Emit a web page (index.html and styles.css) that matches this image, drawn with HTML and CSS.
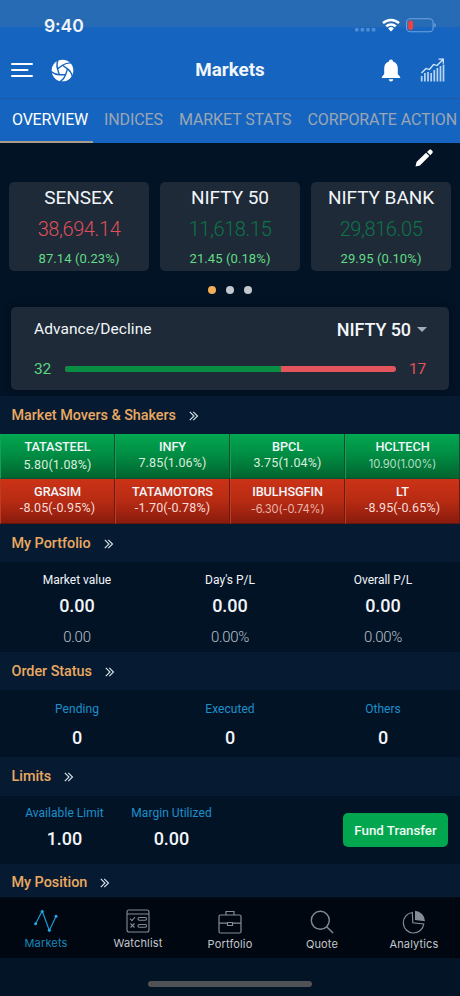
FILE: index.html
```html
<!DOCTYPE html>
<html lang="en">
<head>
<meta charset="utf-8">
<title>Markets</title>
<link rel="stylesheet" href="styles.css">
</head>
<body>
<svg class="defs" width="0" height="0"><defs>
  <symbol id="chev" viewBox="0 0 10 10"><path d="M.8.8 5 5 .8 9.2M4.3.8 8.5 5 4.3 9.2" fill="none" stroke="#dce6ef" stroke-width="1.1"/></symbol>
  <path id="blade" d="M12 6.500 17.230 10.300Q21 13 22.500 18.500"/>
</defs></svg>
<div class="app">
  <div class="status">
    <span class="time">9:40</span>
    <div class="status-icons">
      <svg width="22" height="5" viewBox="0 0 22 5" fill="#4f8cd3"><rect x="1" y="1" width="3.6" height="3.6" rx="1"/><rect x="6.6" y="1" width="3.6" height="3.6" rx="1"/><rect x="12.2" y="1" width="3.6" height="3.6" rx="1"/><rect x="17.8" y="1" width="3.6" height="3.6" rx="1"/></svg>
      <svg class="wifi" width="18" height="14" viewBox="0 0 18 14"><g fill="none" stroke="#fff" stroke-width="2.5"><path d="M1 5.1a11.6 11.6 0 0 1 16 0"/><path d="M4.2 8.4a7 7 0 0 1 9.6 0"/></g><path d="M6.1 10.4a4.3 4.3 0 0 1 5.800 0L9 13.400z" fill="#fff"/></svg>
      <svg class="battery" width="31" height="15" viewBox="0 0 31 15"><rect x=".6" y=".8" width="26.5" height="13" rx="3.8" fill="none" stroke="#6fa2df" stroke-width="1.1"/><path d="M28.400 5.200c2 .7 2 3.500 0 4.200z" fill="#6fa2df"/><rect x="2.200" y="2.600" width="4.800" height="9.500" rx="2" fill="#f0413f"/></svg>
    </div>
  </div>
  <header class="bar">
    <div class="bar-side">
      <svg width="22" height="16" viewBox="0 0 22 16" stroke="#fff" stroke-width="2" stroke-linecap="round"><path d="M1 2h20M1 8h15.500M1 14h20"/></svg>
      <svg class="logo" width="23" height="23" viewBox="0 0 24 24"><circle cx="12" cy="12" r="11.300" fill="#fff"/><g fill="none" stroke="#1565c0" stroke-width="1.400"><use href="#blade"/><use href="#blade" transform="rotate(72 12 12)"/><use href="#blade" transform="rotate(144 12 12)"/><use href="#blade" transform="rotate(216 12 12)"/><use href="#blade" transform="rotate(288 12 12)"/></g></svg>
    </div>
    <h1>Markets</h1>
    <div class="bar-side right">
      <svg width="20" height="23" viewBox="0 0 20 23" fill="#fff"><path d="M10 .5c1.200 0 2 .8 2 2 3.200 1 4.800 3.600 4.800 7v5.600l2.400 2.800v1.200H.8v-1.200l2.400-2.800V9.500c0-3.400 1.600-6 4.800-7 0-1.200.8-2 2-2zM7.800 20.300h4.400c0 1.300-1 2.200-2.200 2.200s-2.200-.9-2.200-2.200z"/></svg>
      <svg class="growth" width="25" height="24" viewBox="0 0 25 24" fill="none" stroke="#d5e8fb"><path d="M1.500 15 6 10.500 9.500 11.500 13.500 6.500 17 7.500 23 1.500M18.500 1.200h4.800v4.600" stroke-width="1.300"/><path d="M1.700 18v5.500M4.900 15v8.500M8 14v9.500M11.200 15v8.500M14.300 12v11.500M17.400 10v13.500M20.500 8v15.500M23.500 6.500v17" stroke-width="1.700" opacity=".85"/></svg>
    </div>
  </header>
  <nav class="tabs">
    <span class="tab on">OVERVIEW</span><span class="tab">INDICES</span><span class="tab">MARKET STATS</span><span class="tab">CORPORATE ACTION</span>
  </nav>
  <div class="edit"><svg width="20" height="20" viewBox="0 0 20 20" fill="#fff"><path d="M1.500 18.500 2.500 14 12 4.800 15.400 8.100 5.900 17.400ZM13 3.900 15.400 1.700Q16.300 1 17.200 1.800L18.400 3Q19.200 4 18.400 4.900L16.300 7.200Z"/></svg></div>
  <section class="indices">
    <article><h2>SENSEX</h2><p class="price down">38,694.14</p><p class="chg">87.14 (0.23%)</p></article>
    <article><h2>NIFTY 50</h2><p class="price">11,618.15</p><p class="chg">21.45 (0.18%)</p></article>
    <article><h2>NIFTY BANK</h2><p class="price">29,816.05</p><p class="chg">29.95 (0.10%)</p></article>
  </section>
  <div class="dots"><i class="on"></i><i></i><i></i></div>
  <section class="adv">
    <div class="adv-top"><span class="adv-label">Advance/Decline</span><span class="adv-index">NIFTY 50</span><i class="caret"></i></div>
    <div class="adv-row"><span class="up-n">32</span><div class="meter"><i></i></div><span class="down-n">17</span></div>
  </section>
  <h3 class="head movers-head"><span>Market Movers &amp; Shakers</span><svg><use href="#chev"/></svg></h3>
  <section class="tiles">
    <div class="low"><b>TATASTEEL</b><span>5.80(1.08%)</span></div>
    <div><b>INFY</b><span>7.85(1.06%)</span></div>
    <div><b>BPCL</b><span>3.75(1.04%)</span></div>
    <div class="plain"><b>HCLTECH</b><span>10.90(1.00%)</span></div>
    <div class="red"><b>GRASIM</b><span>-8.05(-0.95%)</span></div>
    <div class="red"><b>TATAMOTORS</b><span>-1.70(-0.78%)</span></div>
    <div class="red plain"><b>IBULHSGFIN</b><span>-6.30(-0.74%)</span></div>
    <div class="red"><b>LT</b><span>-8.95(-0.65%)</span></div>
  </section>
  <h3 class="head"><span>My Portfolio</span><svg><use href="#chev"/></svg></h3>
  <section class="stats portfolio">
    <div><span class="label">Market value</span><b>0.00</b><span class="sub">0.00</span></div>
    <div><span class="label">Day's P/L</span><b>0.00</b><span class="sub">0.00%</span></div>
    <div><span class="label">Overall P/L</span><b>0.00</b><span class="sub">0.00%</span></div>
  </section>
  <h3 class="head"><span>Order Status</span><svg><use href="#chev"/></svg></h3>
  <section class="stats orders">
    <div><span class="label">Pending</span><b>0</b></div>
    <div><span class="label">Executed</span><b>0</b></div>
    <div><span class="label">Others</span><b>0</b></div>
  </section>
  <h3 class="head limits-head"><span>Limits</span><svg><use href="#chev"/></svg></h3>
  <section class="stats limits">
    <div><span class="label">Available Limit</span><b>1.00</b></div>
    <div><span class="label">Margin Utilized</span><b>0.00</b></div>
    <button>Fund Transfer</button>
  </section>
  <h3 class="head last"><span>My Position</span><svg><use href="#chev"/></svg></h3>
  <nav class="bottom">
    <a class="on"><svg width="24" height="24" viewBox="0 0 24 24" fill="none" stroke="#169bd7" stroke-width="1.200"><path d="M1.500 15 8.200 2 15.300 21.500 22 7.500"/><g fill="#22a9e8" stroke="none"><circle cx="1.600" cy="14.700" r="1.500"/><circle cx="8.200" cy="2.500" r="1.500"/><circle cx="15.300" cy="21.200" r="1.500"/><circle cx="22" cy="7.300" r="1.500"/></g></svg><span>Markets</span></a>
    <a class="watch"><svg width="24" height="24" viewBox="0 0 24 24" fill="none" stroke="#858b93" stroke-width="1.100"><rect x="1" y="1" width="22" height="22" rx="2"/><path d="M1 5h22M4 9.700 6 11.700 9 8M4.500 14.500l4 4M8.500 14.500l-4 4"/><rect x="12" y="8.500" width="8.500" height="2.800" rx="1.200"/><rect x="12" y="15.500" width="8.500" height="2.800" rx="1.200"/></svg><span>Watchlist</span></a>
    <a><svg width="24" height="24" viewBox="0 0 24 24" fill="none" stroke="#858b93" stroke-width="1.200"><rect x="1" y="5" width="22" height="18" rx="1.500"/><path d="M8 5V1.500h8V5M1 13.200h8.500M14.500 13.200H23M9.500 12.500h5v3h-5z"/></svg><span>Portfolio</span></a>
    <a><svg width="24" height="24" viewBox="0 0 24 24" fill="none" stroke="#858b93" stroke-width="1.400"><circle cx="10.300" cy="10.300" r="9"/><path d="m16.700 16.700 6.300 6.300"/></svg><span>Quote</span></a>
    <a><svg width="24" height="24" viewBox="0 0 24 24"><path d="M10.300 2.500A10.300 10.300 0 1 0 21.800 14L10.800 12.800Z" fill="none" stroke="#858b93" stroke-width="1.200"/><path d="M13 .8A10.500 10.500 0 0 1 23 11.200L13 10Z" fill="#858b93"/></svg><span>Analytics</span></a>
  </nav>
  <div class="home"><i></i></div>
</div>
</body>
</html>
```
FILE: styles.css
```css
* { box-sizing: border-box; }
body { margin: 0; background: #031326; font-family: Roboto, "Liberation Sans", sans-serif; color: #f2f6fa; }
h1, h2, h3, p { margin: 0; font-weight: 400; }
i { display: block; }
.defs { display: block; }
.app { width: 460px; height: 996px; overflow: hidden; display: flex; flex-direction: column; white-space: nowrap; }
.app > * { flex: none; }

.status { height: 48px; padding: 0 24px 0 44px; display: flex; justify-content: space-between; background: linear-gradient(#286bb5 0 26px, #1565c0 28px); }
.time { font: 600 17.5px/20px Inter, sans-serif; margin-top: 16px; letter-spacing: -.1px; }
.status-icons { display: flex; align-items: flex-start; padding-top: 18px; }
.status-icons > :first-child { margin: 9px 6px 0 0; }
.wifi { margin-right: 6px; }
.battery { margin-right: -1px; }

.bar { height: 50px; padding: 0 15px 6px 11px; display: flex; justify-content: space-between; align-items: center; background: #1565c0; }
.bar-side { width: 120px; display: flex; align-items: center; gap: 18px; }
.bar-side.right { justify-content: flex-end; gap: 19px; width: 116px; }
.bar h1 { font-size: 18.8px; font-weight: 700; }
.tabs { height: 45px; display: flex; background: #1565c0; border-top: 1px solid #1e59a4; font-size: 16px; line-height: 42px; color: #9ba6b4; gap: 16px; }
.tab { flex: none; letter-spacing: -.1px; }
.tab.on { color: #fff; padding-left: 12px; width: 93px; border-bottom: 2px solid #a79c90; margin-right: -5px; letter-spacing: -.2px; }

.edit { height: 39px; display: flex; justify-content: flex-end; padding: 5px 26px 0 0; }
.indices { display: grid; grid-template-columns: repeat(3, 140px); justify-content: space-between; padding: 0 9px; }
.indices article { height: 89px; border-radius: 5px; background: #1e2a37; text-align: center; padding-top: 5px; }
.indices h2 { font-size: 19px; line-height: 22px; letter-spacing: -.05px; }
.price { font-size: 20px; line-height: 24px; margin-top: 8px; font-weight: 300; letter-spacing: -.4px; color: #0d7548; }
.price.down { color: #de5059; }
.chg { font-size: 13px; line-height: 16px; margin-top: 10px; color: #62dc86; letter-spacing: .1px; }
.dots { display: flex; gap: 10px; justify-content: center; padding-top: 15px; height: 36px; }
.dots i { width: 8px; height: 8px; border-radius: 50%; background: #c3c8cf; }
.dots .on { background: #f5ae58; }

.adv { margin: 0 11px; height: 83px; border-radius: 5px; background: #1e2a37; padding: 10px 22px 0 23px; box-shadow: 0 0 7px #010d1b; }
.adv-top { display: flex; align-items: center; height: 24px; }
.adv-label { font-size: 15.5px; margin-right: auto; letter-spacing: .05px; }
.adv-index { font-size: 18px; font-weight: 500; letter-spacing: -.1px; }
.caret { border: 5px solid transparent; border-top-color: #a3abb4; border-bottom: 0; margin-left: 6px; }
.adv-row { display: flex; align-items: center; height: 20px; margin-top: 18px; font-size: 15.5px; }
.up-n { color: #5bd782; width: 31px; letter-spacing: -.3px; }
.meter { width: 331px; height: 6px; border-radius: 3px; background: #e4545c; overflow: hidden; }
.meter i { width: 216px; height: 6px; background: #088d43; }
.down-n { color: #e2525b; margin-left: auto; margin-right: 1px; letter-spacing: -.2px; }

.head { display: flex; align-items: center; gap: 13px; height: 38px; padding: 0 12px 0 11.5px; background: #061b32; color: #eaa961; font-size: 14.4px; letter-spacing: -.03px; font-weight: 500; }
.head svg { width: 10px; height: 10px; margin-top: 1px; }
.movers-head { margin-top: 6px; }
.tiles { display: grid; grid-template-columns: repeat(4, 1fr); grid-auto-rows: 45px; }
.tiles div { display: flex; flex-direction: column; align-items: center; padding-top: 5px; background: linear-gradient(#02a751, #008b42 50%, #02642f); border-right: 1px solid #144c2d; border-left: 1px solid #12a057; border-bottom: 1px solid #0a5030; }
.tiles .red { background: linear-gradient(#cc3317, #b72b13 50%, #891b0d); border-right-color: #6a1a12; border-left-color: #c03c20; border-bottom-color: #65160e; }
.tiles b { font-size: 12.7px; line-height: 16px; font-weight: 500; letter-spacing: -.1px; }
.tiles span { font-size: 12.5px; line-height: 15px; letter-spacing: .15px; color: #dceedf; }
.tiles .low span { margin-top: 2px; }
.tiles .red span { color: #f7ddd8; }
.tiles .plain span { font: 11.2px/18px Inter, sans-serif; letter-spacing: -.15px; color: #b3dec3; }
.tiles .red.plain span { color: #e9b4aa; }

.stats { display: grid; grid-template-columns: repeat(3, 153px); justify-content: center; }
.stats div { display: flex; flex-direction: column; align-items: center; }
.label { font-size: 12px; line-height: 16px; letter-spacing: 0; }
.stats b { font-size: 18px; line-height: 22px; font-weight: 500; }
.sub { font-size: 15px; line-height: 18px; font-weight: 300; letter-spacing: -.3px; color: #b7c0ca; }
.portfolio { height: 90px; padding-top: 10px; }
.portfolio b { margin-top: 7px; }
.portfolio .sub { margin-top: 11px; }
.orders { height: 67px; padding-top: 11px; }
.orders .label, .limits .label { color: #1c90cb; letter-spacing: .05px; }
.orders b { margin-top: 10px; }
.limits-head { height: 39px; }
.limits { height: 68px; padding: 9px 12px 0 11px; display: flex; justify-content: flex-start; }
.limits > div { width: 107px; }
.limits b { margin-top: 7px; }
button { margin: 8px 0 0 auto; width: 105px; height: 34px; padding: 0; border: 0; border-radius: 5px; background: #02a64f; color: #f2faf5; font: 500 13.3px Roboto, sans-serif; }
.head.last { height: 33px; align-items: flex-start; padding-top: 10px; line-height: 18px; }
.head.last svg { margin-top: 4px; }

.bottom { height: 61px; background: #010710; display: grid; grid-template-columns: repeat(5, 1fr); border-top: 1px solid #020c18; }
.bottom a { display: flex; flex-direction: column; align-items: center; padding-top: 12px; font: 11px/14px Inter, sans-serif; letter-spacing: .15px; color: #c3c8ce; }
.bottom svg { display: block; }
.bottom span { margin-top: 3px; }
.bottom .on, .bottom .watch { padding-top: 11px; }
.bottom .on { color: #1787bd; }
.home { flex: 1; padding-top: 23px; background: #041427; }
.home i { width: 164px; height: 6px; border-radius: 3px; background: #505154; margin: 0 auto; }
```
